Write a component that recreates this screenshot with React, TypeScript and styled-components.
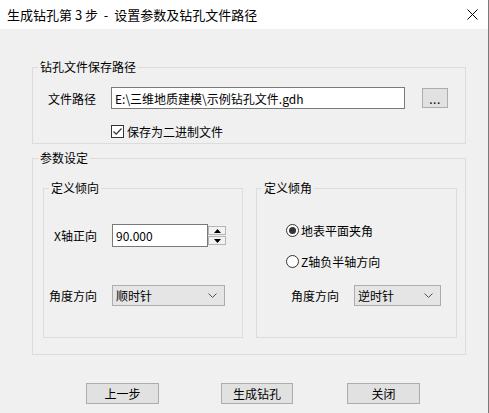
import React from "react";
import styled, { createGlobalStyle } from "styled-components";

const GlobalStyle = createGlobalStyle`
  html, body {
    margin: 0;
    padding: 0;
    background: #ffffff;
  }
  body {
    font-family: "Noto Sans CJK SC", "Liberation Sans", sans-serif;
    font-size: 12px;
    color: #000;
  }
`;

const Window = styled.div`
  width: 489px;
  height: 413px;
  box-sizing: border-box;
  border-right: 1px solid #7a7a7a;
  background: #f0f0f0;
  display: flex;
  flex-direction: column;
  overflow: hidden;
`;

const TitleBar = styled.div`
  height: 29px;
  flex: none;
  background: #ffffff;
  display: flex;
  align-items: center;
  justify-content: space-between;
  padding: 0 10px 0 7px;
  font-size: 13px;
  white-space: pre;
`;

const Content = styled.div`
  padding-left: 32px;
  display: flex;
  flex-direction: column;
`;

const GroupBox = styled.fieldset<{ $w: number; $h: number; $mt?: number }>`
  box-sizing: border-box;
  width: ${(p) => p.$w}px;
  height: ${(p) => p.$h}px;
  margin: ${(p) => p.$mt ?? 0}px 0 0 0;
  padding: 0;
  border: 1px solid #dcdcdc;
  min-width: 0;
`;

const Legend = styled.legend`
  margin-left: 5px;
  padding: 0 2px;
  line-height: 16px;
  font-size: 12px;
`;

const GroupBody = styled.div<{ $pt: number; $pl: number }>`
  padding: ${(p) => p.$pt}px 0 0 ${(p) => p.$pl}px;
  display: flex;
  flex-direction: column;
`;

const Row = styled.div<{ $mt?: number }>`
  display: flex;
  align-items: center;
  margin-top: ${(p) => p.$mt ?? 0}px;
`;

const Label = styled.span<{ $w: number; $align?: string }>`
  width: ${(p) => p.$w}px;
  flex: none;
  text-align: ${(p) => p.$align ?? "left"};
  white-space: nowrap;
`;

const TextBox = styled.div<{ $w: number; $h: number }>`
  box-sizing: border-box;
  width: ${(p) => p.$w}px;
  height: ${(p) => p.$h}px;
  background: #ffffff;
  border: 1px solid #7a7a7a;
  padding: 0 3px;
  display: flex;
  align-items: center;
  white-space: nowrap;
  font-size: 12px;
`;

const SmallButton = styled.div`
  box-sizing: border-box;
  width: 26px;
  height: 20px;
  margin-left: 17px;
  background: #e1e1e1;
  border: 1px solid #adadad;
  display: flex;
  align-items: center;
  justify-content: center;
  font-size: 12px;
  letter-spacing: 0.5px;
`;

const CheckLine = styled.label`
  display: flex;
  align-items: center;
  gap: 3px;
  margin-left: 63px;
`;

const RadioLine = styled.label`
  display: flex;
  align-items: center;
  gap: 2px;
  height: 16px;
`;

const Spin = styled.div`
  display: flex;
  align-items: center;
  height: 23px;
`;

const SpinButtons = styled.div`
  display: flex;
  flex-direction: column;
  gap: 1px;
  height: 19px;
  margin-left: 0;
`;

const SpinButton = styled.div`
  box-sizing: border-box;
  width: 18px;
  height: 9px;
  background: #f2f2f2;
  border: 1px solid #b4b4b4;
  display: flex;
  align-items: center;
  justify-content: center;
`;

const Combo = styled.div<{ $w: number }>`
  box-sizing: border-box;
  width: ${(p) => p.$w}px;
  height: 21px;
  background: #e5e5e5;
  border: 1px solid #adadad;
  padding: 0 7px 0 3px;
  display: flex;
  align-items: center;
  justify-content: space-between;
  font-size: 12px;
`;

const InnerRow = styled.div`
  display: flex;
  gap: 13px;
  margin-top: 14px;
`;

const ButtonRow = styled.div`
  display: flex;
  margin-top: 28px;
  padding-left: 86px;
`;

const Button = styled.div<{ $w: number; $ml?: number }>`
  box-sizing: border-box;
  width: ${(p) => p.$w}px;
  height: 21px;
  margin-left: ${(p) => p.$ml ?? 0}px;
  background: #e1e1e1;
  border: 1px solid #adadad;
  display: flex;
  align-items: center;
  justify-content: center;
  font-size: 12px;
`;

const CloseIcon = () => (
  <svg width="11" height="11" viewBox="0 0 11 11">
    <path d="M0.5 0.5 L10.5 10.5 M10.5 0.5 L0.5 10.5" stroke="#000" strokeWidth="1" />
  </svg>
);

const CheckBox = () => (
  <svg width="13" height="13" viewBox="0 0 13 13">
    <rect x="0.5" y="0.5" width="12" height="12" fill="#fff" stroke="#333" />
    <path d="M2.5 6.5 L5.2 9.2 L10.5 3.5" fill="none" stroke="#333" strokeWidth="1.2" />
  </svg>
);

const Radio = ({ checked }: { checked?: boolean }) => (
  <svg width="13" height="13" viewBox="0 0 13 13">
    <circle cx="6.5" cy="6.5" r="6" fill="#fff" stroke="#333" />
    {checked && <circle cx="6.5" cy="6.5" r="3.5" fill="#333" />}
  </svg>
);

const Chevron = () => (
  <svg width="9" height="5" viewBox="0 0 9 5">
    <path d="M0.5 0.5 L4.5 4.5 L8.5 0.5" fill="none" stroke="#555" strokeWidth="1" />
  </svg>
);

const Arrow = ({ up }: { up?: boolean }) => (
  <svg width="7" height="4" viewBox="0 0 7 4">
    <path d={up ? "M0 4 L3.5 0 L7 4 Z" : "M0 0 L3.5 4 L7 0 Z"} fill="#000" />
  </svg>
);

export default function App() {
  return (
    <>
      <GlobalStyle />
      <Window>
        <TitleBar>
          <span>{"生成钻孔第 3 步  -  设置参数及钻孔文件路径"}</span>
          <CloseIcon />
        </TitleBar>
        <Content>
          <GroupBox $w={434} $h={85} $mt={30}>
            <Legend>钻孔文件保存路径</Legend>
            <GroupBody $pt={12} $pl={15}>
              <Row>
                <Label $w={63}>文件路径</Label>
                <TextBox $w={294} $h={22}>E:\三维地质建模\示例钻孔文件.gdh</TextBox>
                <SmallButton>...</SmallButton>
              </Row>
              <Row $mt={14}>
                <CheckLine>
                  <CheckBox />
                  <span>保存为二进制文件</span>
                </CheckLine>
              </Row>
            </GroupBody>
          </GroupBox>

          <GroupBox $w={434} $h={205} $mt={6}>
            <Legend>参数设定</Legend>
            <GroupBody $pt={0} $pl={10}>
              <InnerRow>
                <GroupBox $w={200} $h={158}>
                  <Legend>定义倾向</Legend>
                  <GroupBody $pt={28} $pl={0}>
                    <Row>
                      <Label $w={53} $align="right">X轴正向</Label>
                      <Spin style={{ marginLeft: 15 }}>
                        <TextBox $w={96} $h={23}>90.000</TextBox>
                        <SpinButtons>
                          <SpinButton><Arrow up /></SpinButton>
                          <SpinButton><Arrow /></SpinButton>
                        </SpinButtons>
                      </Spin>
                    </Row>
                    <Row $mt={38}>
                      <Label $w={68} $align="left" style={{ paddingLeft: 5, boxSizing: "border-box" }}>角度方向</Label>
                      <Combo $w={113}>
                        <span>顺时针</span>
                        <Chevron />
                      </Combo>
                    </Row>
                  </GroupBody>
                </GroupBox>

                <GroupBox $w={201} $h={158}>
                  <Legend>定义倾角</Legend>
                  <GroupBody $pt={26} $pl={29}>
                    <RadioLine>
                      <Radio checked />
                      <span>地表平面夹角</span>
                    </RadioLine>
                    <Row $mt={15}>
                      <RadioLine>
                        <Radio />
                        <span>Z轴负半轴方向</span>
                      </RadioLine>
                    </Row>
                    <Row $mt={16}>
                      <Label $w={68} style={{ paddingLeft: 5, boxSizing: "border-box" }}>角度方向</Label>
                      <Combo $w={87}>
                        <span>逆时针</span>
                        <Chevron />
                      </Combo>
                    </Row>
                  </GroupBody>
                </GroupBox>
              </InnerRow>
            </GroupBody>
          </GroupBox>
        </Content>
        <ButtonRow>
          <Button $w={73}>上一步</Button>
          <Button $w={72} $ml={62}>生成钻孔</Button>
          <Button $w={73} $ml={54}>关闭</Button>
        </ButtonRow>
      </Window>
    </>
  );
}
